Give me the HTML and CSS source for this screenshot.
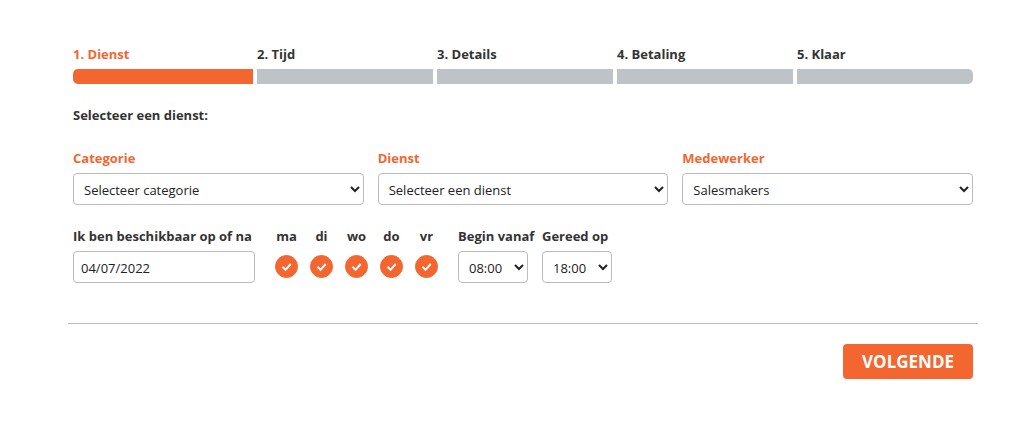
FILE: index.html
```html
<!DOCTYPE html>
<html lang="nl">
<head>
<meta charset="utf-8">
<meta name="viewport" content="width=device-width, initial-scale=1">
<title>Afspraak maken</title>
<link rel="stylesheet" href="styles.css">
</head>
<body>
<svg class="sprite" aria-hidden="true">
  <symbol id="check" viewBox="0 0 23 23"><path d="M7.5 11.8 10.5 14.8 15.7 9" fill="none" stroke="#fff" stroke-width="2"/></symbol>
</svg>
<form class="booking">
  <ol class="steps">
    <li class="step step-active">1. Dienst<span class="step-bar"></span></li>
    <li class="step">2. Tijd<span class="step-bar"></span></li>
    <li class="step">3. Details<span class="step-bar"></span></li>
    <li class="step">4. Betaling<span class="step-bar"></span></li>
    <li class="step">5. Klaar<span class="step-bar"></span></li>
  </ol>
  <p class="intro">Selecteer een dienst:</p>
  <div class="row">
    <div class="field field-wide">
      <label class="label label-accent" for="category">Categorie</label>
      <select class="control" id="category"><option>Selecteer categorie</option></select>
    </div>
    <div class="field field-wide">
      <label class="label label-accent" for="service">Dienst</label>
      <select class="control" id="service"><option>Selecteer een dienst</option></select>
    </div>
    <div class="field field-wide">
      <label class="label label-accent" for="employee">Medewerker</label>
      <select class="control" id="employee"><option>Salesmakers</option></select>
    </div>
  </div>
  <div class="row">
    <div class="field field-date">
      <label class="label" for="date">Ik ben beschikbaar op of na</label>
      <input class="control" id="date" type="text" value="04/07/2022">
    </div>
    <div class="days">
      <label class="day">ma<span class="tick"><input class="tick-box" type="checkbox" checked><svg class="tick-mark"><use href="#check"/></svg></span></label>
      <label class="day">di<span class="tick"><input class="tick-box" type="checkbox" checked><svg class="tick-mark"><use href="#check"/></svg></span></label>
      <label class="day">wo<span class="tick"><input class="tick-box" type="checkbox" checked><svg class="tick-mark"><use href="#check"/></svg></span></label>
      <label class="day">do<span class="tick"><input class="tick-box" type="checkbox" checked><svg class="tick-mark"><use href="#check"/></svg></span></label>
      <label class="day">vr<span class="tick"><input class="tick-box" type="checkbox" checked><svg class="tick-mark"><use href="#check"/></svg></span></label>
    </div>
    <div class="field field-time">
      <label class="label" for="from">Begin vanaf</label>
      <select class="control" id="from"><option>08:00</option></select>
    </div>
    <div class="field field-time">
      <label class="label" for="until">Gereed op</label>
      <select class="control" id="until"><option>18:00</option></select>
    </div>
  </div>
  <div class="actions">
    <button class="next" type="button">VOLGENDE</button>
  </div>
</form>
</body>
</html>
```
FILE: styles.css
```css
* { box-sizing: border-box; }
body {
  margin: 0;
  background: #fff;
  color: #333;
  font: 13px/18px "Open Sans", "Noto Sans", sans-serif;
}
.sprite { position: absolute; width: 0; height: 0; }
.booking { margin: 45px 56px 0 68px; }
.steps {
  display: grid;
  grid-template-columns: repeat(5, minmax(0, 1fr));
  margin: 0 5px;
  padding: 0;
  list-style: none;
}
.step { padding-left: 4px; font-weight: 700; }
.step:first-child { padding-left: 0; }
.step-bar {
  display: block;
  height: 15px;
  margin-top: 6px;
  background: #bdc3c7;
}
.step-active { color: #f4662f; }
.step-active .step-bar { background: #f4662f; }
.step:first-child .step-bar { border-radius: 5px 0 0 5px; }
.step:last-child .step-bar { border-radius: 0 5px 5px 0; }
.intro { margin: 22px 5px 25px; font-weight: 700; }
.row { display: flex; gap: 14px; margin: 0 5px 22px; }
.field { display: flex; flex-direction: column; gap: 6px; }
.field-wide { flex: 1 1 0; min-width: 0; }
.field-date { width: 182px; }
.field-time { width: 70px; }
.label { font-weight: 700; white-space: nowrap; }
.label-accent { color: #f4662f; }
.control {
  width: 100%;
  height: 32px;
  padding: 2px 6px 0;
  border: 1px solid #bbb;
  border-radius: 4px;
  background: #fff;
  color: #222;
  font: inherit;
}
input.control { padding: 2px 7px 0; }
select.control { border-right-width: 1px; }
.days { display: flex; }
.day {
  display: flex;
  flex-direction: column;
  align-items: center;
  gap: 10px;
  width: 35px;
  font-weight: 700;
}
.tick { display: grid; width: 23px; height: 23px; }
.tick-box, .tick-mark { grid-area: 1 / 1; width: 23px; height: 23px; margin: 0; }
.tick-box { appearance: none; border: 1px solid #f4662f; border-radius: 50%; }
.tick-box:checked { background: #f4662f; }
.tick-mark { pointer-events: none; }
.actions {
  display: flex;
  justify-content: flex-end;
  margin-top: 40px;
  padding: 20px 5px;
  border-top: 1px solid #bbb;
}
.next {
  height: 35px;
  padding: 0 19px;
  border: 0;
  border-radius: 4px;
  background: #f4662f;
  color: #fff;
  font: 700 17px/24px "Open Sans", "Noto Sans", sans-serif;
}
```
